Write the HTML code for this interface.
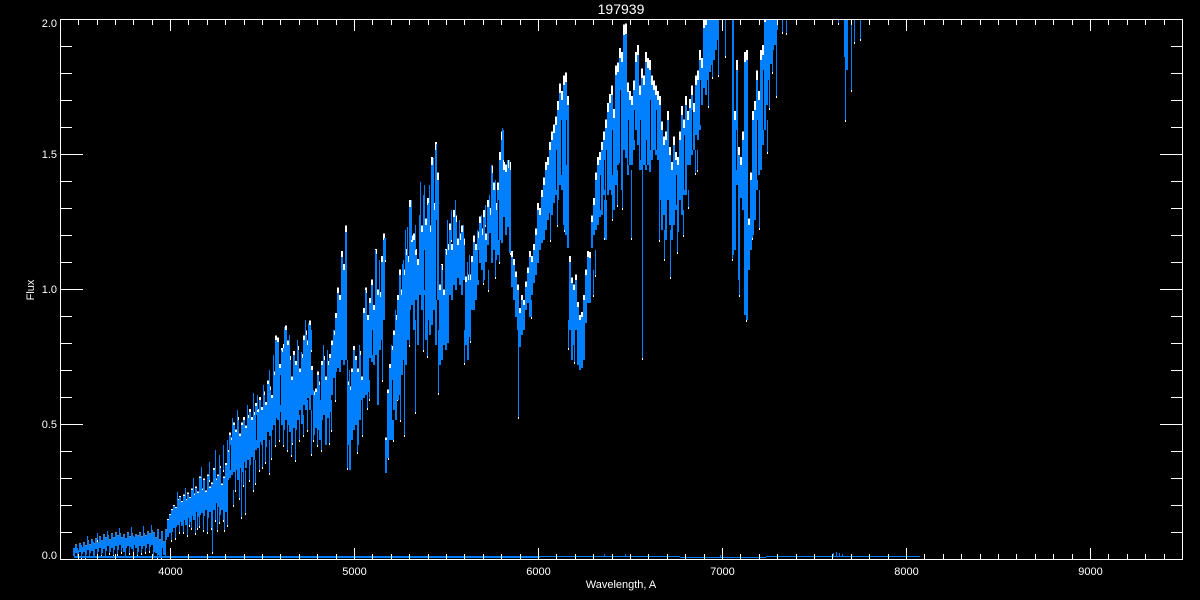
<!DOCTYPE html>
<html lang="en">
<head>
<meta charset="utf-8">
<title>197939</title>
<style>
html,body{margin:0;padding:0;background:#000;width:1200px;height:600px;overflow:hidden}
svg{display:block}
text{font-family:"Liberation Sans",sans-serif;fill:#fff;font-size:11px}
</style>
</head>
<body>
<svg width="1200" height="600" viewBox="0 0 1200 600" xmlns="http://www.w3.org/2000/svg">
<rect width="1200" height="600" fill="#000"/>
<defs>
<clipPath id="c"><rect x="61" y="20" width="1121" height="539"/></clipPath>
<path id="band" d="M74 548V556M76 545V553M78 550V557M80 544V552M82 547V554M84 543V552M86 546V555M88 541V550M90 545V553M92 540V551M94 544V556M96 539V549M98 543V552M100 537V548M102 541V553M104 535V549M106 538V551M108 536V546M110 540V552M112 534V548M114 538V550M116 533V546M118 536V550M120 534V545M122 538V548M124 535V552M126 539V548M128 533V546M130 537V547M132 534V549M134 538V545M136 535V548M138 536V552M140 533V546M142 537V549M144 534V546M146 536V548M148 532V544M150 534V547M152 531V545M154 533V552M156 538V553M158 530V555M160 540V556M162 532V548M164 542V555M166 530V540M168 520V537M170 515V533M172 510V532M174 506V528M176 508V527M178 500V525M180 497V522M182 502V526M184 496V520M186 500V525M188 494V518M190 498V522M192 490V516M194 495V520M196 488V512M198 493V517M200 478V515M202 490V513M204 480V516M206 492V510M208 476V518M210 488V512M212 484V525M214 470V510M216 480V503M218 476V507M220 468V515M222 485V510M224 478V505M226 465V512M228 452V480M230 435V478M232 440V475M234 425V472M236 432V470M238 420V480M240 436V468M242 425V472M244 420V462M246 428V468M248 418V460M250 412V465M252 420V457M254 415V460M256 406V450M258 412V448M260 400V442M262 410V445M264 395V440M266 405V447M268 384V432M270 390V436M272 398V430M274 375V425M276 340V418M278 342V420M280 368V412M282 352V425M284 348V430M286 330V420M288 345V425M290 360V432M292 380V420M294 355V428M296 365V430M298 350V420M300 372V410M302 358V424M304 340V405M306 335V410M308 345V398M310 325V410M312 370V395M314 395V435M316 392V428M318 375V430M320 385V440M322 365V420M324 360V415M326 380V445M328 365V418M330 358V412M332 345V395M334 335V378M336 318V372M338 293V368M340 300V372M342 257V360M344 270V365M346 232V360M348 385V445M350 390V470M352 372V440M354 350V430M356 360V425M358 372V445M360 355V420M362 380V400M364 313V398M366 293V395M368 320V392M370 303V358M372 285V362M374 310V365M376 255V355M378 295V405M380 297V350M382 262V340M384 240V320M386 440V473M388 393V458M390 368V440M392 350V440M394 335V410M396 320V420M398 300V400M400 275V395M402 295V375M404 275V360M406 255V365M408 262V340M410 207V310M412 242V305M414 240V330M416 255V300M418 265V345M420 235V295M422 232V310M424 240V295M426 225V340M428 205V320M430 232V335M432 165V325M434 210V310M436 150V345M438 180V300M440 290V365M442 270V360M444 295V345M446 255V350M448 250V343M450 230V295M452 250V300M454 217V285M456 222V290M458 245V278M460 240V285M462 232V295M464 245V280M466 282V345M468 280V360M470 280V337M472 262V310M474 242V310M476 250V300M478 238V285M480 223V263M482 235V270M484 217V280M486 240V262M488 207V245M490 215V233M492 173V263M494 190V250M496 210V260M498 190V255M500 160V240M502 140V243M504 170V217M506 172V235M508 168V227M510 170V253M512 257V287M514 265V300M516 277V317M518 290V330M520 313V347M522 300V335M524 305V330M526 287V310M528 273V303M530 257V317M532 262V295M534 250V283M536 235V275M538 210V263M540 215V250M542 197V243M544 185V240M546 170V230M548 165V220M550 150V213M552 140V215M554 133V203M556 125V195M558 110V200M560 93V185M562 100V190M564 85V225M566 82V235M568 105V248M570 262V330M572 283V360M574 290V345M576 280V330M578 307V365M580 320V370M582 317V368M584 300V360M586 275V323M588 257V303M590 258V303M592 222V248M594 205V235M596 180V230M598 165V225M600 160V217M602 150V215M604 140V195M606 128V240M608 112V195M610 103V190M612 95V195M614 118V210M616 75V185M618 72V165M620 58V163M622 62V190M624 35V150M626 34V158M628 92V175M630 100V165M632 105V165M634 90V150M636 62V130M638 55V145M640 95V170M642 78V170M644 85V165M646 62V170M648 68V165M650 70V172M652 85V160M654 90V150M656 95V155M658 100V160M660 105V200M662 130V230M664 145V215M666 140V240M668 120V200M670 155V225M672 170V240M674 145V225M676 160V210M678 165V232M680 140V200M682 115V215M684 128V195M686 105V195M688 120V165M690 108V165M692 95V155M694 112V150M696 85V135M698 80V140M700 60V130M702 68V105M704 28V88M706 25V95M708 20V80M710 20V72M712 20V65M714 20V60M716 20V50M718 20V40M733 20V255M735 120V250M737 70V185M739 155V280M741 165V198M743 140V210M745 62V315M747 60V320M749 225V270M751 180V250M753 120V235M755 110V220M757 80V190M759 100V175M761 60V170M763 55V145M765 22V130M767 20V105M769 20V80M771 20V64M773 20V50M775 20V45M777 20V30M845 20V57M847 20V70"/>
<path id="sp" d="M189 510V525M197 510V528M212 500V552M217 505V530M224 505V530M233 490V505M241 470V517M245 470V513M255 460V483M262 440V467M269 440V473M292 420V443M311 410V454M319 410V438M329 410V443M347 360V468M357 420V452M362 400V435M367 390V408M369 380V399M377 350V395M378 350V393M382 340V380M388 440V458M393 420V440M397 380V399M400 390V420M404 340V435M409 300V345M415 320V412M417 300V332M423 290V350M427 320V356M438 330V393M442 330V343M452 270V298M464 330V363M470 320V341M483 270V283M488 270V290M495 260V277M499 240V262M510 230V253M518 300V417M531 300V317M550 210V240M557 200V225M564 200V230M568 320V348M574 340V362M593 270V295M595 250V275M604 200V238M612 190V219M617 170V205M622 170V208M631 170V238M642 170V358M659 200V240M664 230V259M670 230V277M677 220V252M683 210V235M688 190V207M695 150V173M697 150V170M708 80V106M712 60V77M718 40V75M725 20V56M732 20V259M739 270V295M746 300V320M752 220V238M759 190V228M767 120V152M769 70V108M772 20V72M776 20V96M782 20V32M786 20V33M838 20V23M845 50V120M851 20V90M854 20V42M860 20V39M284 327V370M308 323V370M232 418V450M215 450V480M253 393V430M420 182V250M424 185V250M433 158V230M436 144V200M428 203V240M376 254V290M379 260V300M384 238V280M345 232V280M341 257V290M502 128V170M402 264V300M407 227V280M467 262V300M77 548V556M81 545V557M85 548V558M89 545V556M93 542V555M97 545V557M101 540V555M105 540V556M109 540V553M113 540V555M117 537V554M121 538V552M125 538V556M129 538V553M133 536V552M137 537V555M141 538V553M145 538V552M149 535V551M153 535V556M157 535V557M161 536V557M165 540V556M87 536V545M97 533V540M107 531V540M119 528V538M131 527V536M143 526V535M151 525V535M171 520V540M175 515V538M179 510V532M183 505V532M187 505V535M191 500V528M195 500V533M199 495V526M203 500V530M207 495V532M211 495V528M215 490V520M219 490V522M223 490V520M227 480V525M177 492V505M185 488V500M193 478V495M201 467V490M209 462V480M219 455V475M223 445V470M227 440V465M235 460V490M239 460V498M243 460V485M249 450V480M253 450V490M259 430V470M265 430V462M271 425V458M275 410V445M279 410V440M283 420V445M287 420V450M291 420V455M295 425V460M299 415V440M303 415V435M307 400V430M313 390V440M317 420V445M321 420V450M325 410V435M331 400V430M335 370V400M237 410V425M247 405V420M257 395V410M263 385V400M269 370V390M273 355V380M281 350V370M289 335V360M293 360V385M297 340V365M301 352V375M305 320V340M311 330V350M323 345V365M327 350V380M333 330V345M349 370V390M353 350V375M359 345V370M365 290V320M371 295V310M375 250V275M385 238V260M391 345V365M395 310V340M399 275V310M403 260V290M405 230V270M411 200V240M415 225V250M419 215V250M423 195V240M429 185V235M435 150V200M441 265V295M445 250V280M447 220V260M451 210V240M455 200V230M459 220V245M463 225V250M469 255V285M473 245V270M477 230V255M481 215V240M485 205V225M489 195V215M491 165V195M495 180V210M499 170V195M503 130V160M507 160V180M509 160V180"/>
</defs>
<g clip-path="url(#c)">
  <g fill="none" stroke="#fff" shape-rendering="crispEdges">
    <use href="#band" stroke-width="2" transform="translate(0,559) scale(1,1.02) translate(0,-559)"/>
    <use href="#sp" stroke-width="1" transform="translate(0.5,2)"/>
  </g>
  <g fill="none" stroke="#0080ff" shape-rendering="crispEdges">
    <use href="#band" stroke-width="2"/>
    <use href="#sp" stroke-width="1" transform="translate(0.5,0)"/>
  </g>
  <path fill="none" stroke="#000" stroke-width="1" shape-rendering="crispEdges" transform="translate(0.5,0)" d="M620 90V190M612 130V175M606 150V200M628 120V165M634 110V140M640 120V160M650 100V150M656 110V150M604 160V190M676 175V205M684 135V190M692 110V150M700 80V125M748 130V165M757 120V180M763 70V130M736 130V170M738 60V130M600 175V210M646 140V165M320 380V400M372 330V355M392 380V420M424 250V290M436 220V300M478 250V280M498 200V240M556 150V190M561 120V175M566 120V165M280 375V405M256 415V440M230 445V470"/>
  <path fill="none" stroke="#0080ff" stroke-width="1" shape-rendering="crispEdges" d="M74 556.5H680M74 557.5H540M680 557.5H766M766 556.5H920M833.5 556V553M836.5 556V552M839.5 556V553M842.5 556V554M604.5 556V554M625.5 556V554M720.5 557V555"/>
</g>
<path fill="none" stroke="#fff" stroke-width="1" shape-rendering="crispEdges" d="M60.5 19.5H1182.5V559.5H60.5Z
M78.5 554V559M97.5 554V559M115.5 554V559M133.5 554V559M152.5 554V559M188.5 554V559M207.5 554V559M225.5 554V559M244.5 554V559M262.5 554V559M280.5 554V559M299.5 554V559M317.5 554V559M336.5 554V559M372.5 554V559M391.5 554V559M409.5 554V559M428.5 554V559M446.5 554V559M464.5 554V559M483.5 554V559M501.5 554V559M520.5 554V559M556.5 554V559M575.5 554V559M593.5 554V559M612.5 554V559M630.5 554V559M648.5 554V559M667.5 554V559M685.5 554V559M704.5 554V559M740.5 554V559M759.5 554V559M777.5 554V559M796.5 554V559M814.5 554V559M832.5 554V559M851.5 554V559M869.5 554V559M888.5 554V559M924.5 554V559M943.5 554V559M961.5 554V559M980.5 554V559M998.5 554V559M1016.5 554V559M1035.5 554V559M1053.5 554V559M1072.5 554V559M1108.5 554V559M1127.5 554V559M1145.5 554V559M1164.5 554V559
M170.5 548V559M354.5 548V559M538.5 548V559M722.5 548V559M906.5 548V559M1090.5 548V559
M78.5 20V25M97.5 20V25M115.5 20V25M133.5 20V25M152.5 20V25M188.5 20V25M207.5 20V25M225.5 20V25M244.5 20V25M262.5 20V25M280.5 20V25M299.5 20V25M317.5 20V25M336.5 20V25M372.5 20V25M391.5 20V25M409.5 20V25M428.5 20V25M446.5 20V25M464.5 20V25M483.5 20V25M501.5 20V25M520.5 20V25M556.5 20V25M575.5 20V25M593.5 20V25M612.5 20V25M630.5 20V25M648.5 20V25M667.5 20V25M685.5 20V25M704.5 20V25M740.5 20V25M759.5 20V25M777.5 20V25M796.5 20V25M814.5 20V25M832.5 20V25M851.5 20V25M869.5 20V25M888.5 20V25M924.5 20V25M943.5 20V25M961.5 20V25M980.5 20V25M998.5 20V25M1016.5 20V25M1035.5 20V25M1053.5 20V25M1072.5 20V25M1108.5 20V25M1127.5 20V25M1145.5 20V25M1164.5 20V25
M170.5 20V31M354.5 20V31M538.5 20V31M722.5 20V31M906.5 20V31M1090.5 20V31
M61 46.5H72M61 73.5H72M61 100.5H72M61 127.5H72M61 181.5H72M61 208.5H72M61 235.5H72M61 262.5H72M61 316.5H72M61 343.5H72M61 370.5H72M61 397.5H72M61 451.5H72M61 478.5H72M61 505.5H72M61 532.5H72
M61 154.5H83M61 289.5H83M61 424.5H83
M1171 46.5H1182M1171 73.5H1182M1171 100.5H1182M1171 127.5H1182M1171 181.5H1182M1171 208.5H1182M1171 235.5H1182M1171 262.5H1182M1171 316.5H1182M1171 343.5H1182M1171 370.5H1182M1171 397.5H1182M1171 451.5H1182M1171 478.5H1182M1171 505.5H1182M1171 532.5H1182
M1160 154.5H1182M1160 289.5H1182M1160 424.5H1182"/>
<text x="621" y="14" text-anchor="middle" style="font-size:14px">197939</text>
<text x="57" y="27" text-anchor="end">2.0</text>
<text x="57" y="158" text-anchor="end">1.5</text>
<text x="57" y="293" text-anchor="end">1.0</text>
<text x="57" y="428" text-anchor="end">0.5</text>
<text x="57" y="559" text-anchor="end">0.0</text>
<text x="170.5" y="575" text-anchor="middle">4000</text>
<text x="354.5" y="575" text-anchor="middle">5000</text>
<text x="538.5" y="575" text-anchor="middle">6000</text>
<text x="722.5" y="575" text-anchor="middle">7000</text>
<text x="906.5" y="575" text-anchor="middle">8000</text>
<text x="1090.5" y="575" text-anchor="middle">9000</text>
<text x="621" y="588" text-anchor="middle">Wavelength, A</text>
<text transform="translate(34,290) rotate(-90)" text-anchor="middle">Flux</text>
</svg>
</body>
</html>
